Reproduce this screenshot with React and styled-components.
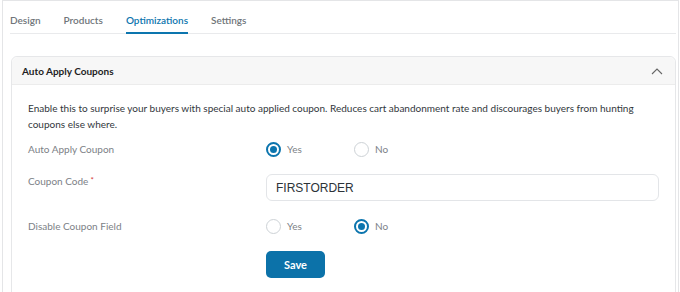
import React from "react";
import styled, { createGlobalStyle } from "styled-components";

const Global = createGlobalStyle`
  html, body { margin: 0; padding: 0; background: #fff; }
  body { font-family: Lato, "Open Sans", sans-serif; }
  * { box-sizing: border-box; }
`;

const Frame = styled.div`
  margin-left: 2px;
  width: 677px;
  height: 292px;
  border: 1px solid #e4e5e7;
  border-bottom: none;
  padding: 0 2px 0 7px;
  overflow: hidden;
`;

const Tabs = styled.nav`
  display: flex;
  gap: 23px;
  height: 33px;
  border-bottom: 1px solid #e9eaec;
  align-items: stretch;
`;

const Tab = styled.div`
  font-size: 10px;
  font-weight: 600;
  color: ${(p) => (p.$active ? "#0c75ae" : "#70757a")};
  display: flex;
  align-items: center;
  padding-top: 6px;
  border-bottom: 2px solid ${(p) => (p.$active ? "#0c75ae" : "transparent")};
  margin-bottom: -1px;
`;

const Card = styled.section`
  margin: 22px 0 0 1px;
  width: 665px;
  border: 1px solid #e6e7e9;
  border-radius: 6px 6px 0 0;
  height: 240px;
`;

const CardHeader = styled.header`
  height: 28px;
  background: #f7f7f7;
  border-bottom: 1px solid #ececec;
  border-radius: 6px 6px 0 0;
  display: flex;
  align-items: center;
  justify-content: space-between;
  padding: 0 12px 0 10px;
`;

const CardTitle = styled.h3`
  margin: 0;
  font-size: 10px;
  font-weight: 700;
  color: #1e1e1e;
`;

const CardBody = styled.div`
  padding: 15px 16px 0 16px;
`;

const Description = styled.p`
  margin: 0 0 6px;
  font-size: 10px;
  line-height: 16px;
  color: #32373c;
`;

const Row = styled.div`
  display: grid;
  grid-template-columns: 238px 1fr;
  align-items: ${(p) => p.$align || "center"};
  min-height: ${(p) => p.$h || 28}px;
  margin-bottom: ${(p) => p.$mb || 0}px;
`;

const Label = styled.label`
  font-size: 10px;
  color: #7c8186;
  padding-top: ${(p) => p.$pt || 0}px;
`;

const Req = styled.span`
  color: #d63638;
  margin-left: 2px;
  font-size: 8px;
  vertical-align: top;
`;

const RadioGroup = styled.div`
  display: flex;
`;

const Option = styled.label`
  width: 88px;
  display: flex;
  align-items: center;
  gap: 6px;
  font-size: 10px;
  color: #7c8186;
`;

const Radio = styled.span`
  width: 15px;
  height: 15px;
  border-radius: 50%;
  border: ${(p) => (p.$on ? "2px solid #0c75ae" : "1px solid #cdd2d6")};
  display: flex;
  align-items: center;
  justify-content: center;
  &::after {
    content: "";
    display: ${(p) => (p.$on ? "block" : "none")};
    width: 7px;
    height: 7px;
    border-radius: 50%;
    background: #0c75ae;
  }
`;

const Input = styled.div`
  height: 27px;
  border: 1px solid #e3e5e8;
  border-radius: 6px;
  display: flex;
  align-items: center;
  padding-left: 9px;
  font-family: "Liberation Sans", Arial, sans-serif;
  font-size: 12px;
  color: #2c3338;
`;

const SaveButton = styled.button`
  width: 59px;
  height: 27px;
  border: none;
  border-radius: 5px;
  background: #0c72a9;
  color: #fff;
  font-family: inherit;
  font-size: 11px;
  font-weight: 700;
`;

function Choice({ options, value }) {
  return (
    <RadioGroup>
      {options.map((o) => (
        <Option key={o}>
          <Radio $on={o === value} />
          {o}
        </Option>
      ))}
    </RadioGroup>
  );
}

export default function App() {
  return (
    <>
      <Global />
      <Frame>
        <Tabs>
          <Tab>Design</Tab>
          <Tab>Products</Tab>
          <Tab $active>Optimizations</Tab>
          <Tab>Settings</Tab>
        </Tabs>
        <Card>
          <CardHeader>
            <CardTitle>Auto Apply Coupons</CardTitle>
            <svg width="12" height="8" viewBox="0 0 12 8" fill="none">
              <path d="M1 7 L6 2 L11 7" stroke="#666" strokeWidth="1.1" />
            </svg>
          </CardHeader>
          <CardBody>
            <Description>
              Enable this to surprise your buyers with special auto applied coupon. Reduces cart abandonment rate and discourages buyers from hunting coupons else where.
            </Description>
            <Row $h={22} $mb={14}>
              <Label>Auto Apply Coupon</Label>
              <Choice options={["Yes", "No"]} value="Yes" />
            </Row>
            <Row $h={26} $align="start" $mb={14}>
              <Label $pt={1}>
                Coupon Code<Req>*</Req>
              </Label>
              <Input>FIRSTORDER</Input>
            </Row>
            <Row $h={22} $mb={14}>
              <Label>Disable Coupon Field</Label>
              <Choice options={["Yes", "No"]} value="No" />
            </Row>
            <Row $h={27}>
              <span />
              <div>
                <SaveButton>Save</SaveButton>
              </div>
            </Row>
          </CardBody>
        </Card>
      </Frame>
    </>
  );
}
